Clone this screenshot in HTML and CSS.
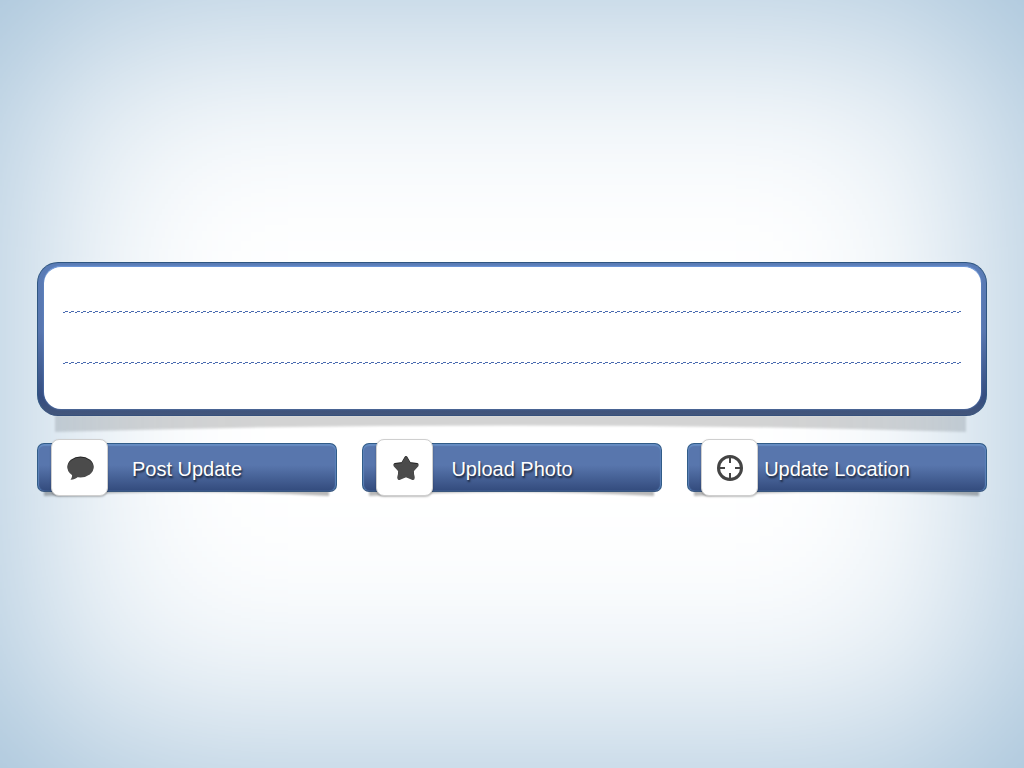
FILE: index.html
```html
<!DOCTYPE html>
<html lang="en">
<head>
<meta charset="utf-8">
<meta name="viewport" content="width=device-width, initial-scale=1">
<title>Post Update</title>
<link rel="stylesheet" href="styles.css">
</head>
<body class="page">
<form class="composer" onsubmit="return false">
  <div class="frame">
    <svg class="frame-shadow" viewBox="0 0 912 18" preserveAspectRatio="none" aria-hidden="true"><path d="M0 0H912V18Q456 4 0 18Z"/></svg>
    <div class="sheet">
      <textarea class="status" aria-label="Status update" rows="2"></textarea>
    </div>
  </div>
  <div class="actions">
    <button class="action" type="submit">
      <svg class="action-shadow" viewBox="0 0 286 8" preserveAspectRatio="none" aria-hidden="true"><path d="M0 0H286V8Q143 0 0 8Z"/></svg>
      <span class="face"><span class="label">Post Update</span></span>
      <span class="tile"><svg class="icon" viewBox="0 0 28 28" aria-hidden="true"><g class="edge"><ellipse cx="13.500" cy="11.500" rx="13" ry="10"/></g><g class="fill"><ellipse cx="13.500" cy="12.500" rx="13" ry="10"/><path d="M4.500 17C5.500 20.500 5.300 22.500 3.500 24.800C7 24.800 9.500 23.500 11.500 21Z"/></g></svg></span>
    </button>
    <button class="action" type="button">
      <svg class="action-shadow" viewBox="0 0 286 8" preserveAspectRatio="none" aria-hidden="true"><path d="M0 0H286V8Q143 0 0 8Z"/></svg>
      <span class="face"><span class="label">Upload Photo</span></span>
      <span class="tile"><svg class="icon" viewBox="0 0 28 28" aria-hidden="true"><path class="edge rounded" d="M14 2.500L17.500 8.500L25 9.500L20 15L21 22.500L14 20L7 22.500L8 15L3 9.500L10.500 8.500Z"/><path class="fill rounded" d="M14 3.500L17.500 9.500L25 10.500L20 16L21 23.500L14 20.500L7 23.500L8 16L3 10.500L10.500 9.500Z"/></svg></span>
    </button>
    <button class="action" type="button">
      <svg class="action-shadow" viewBox="0 0 286 8" preserveAspectRatio="none" aria-hidden="true"><path d="M0 0H286V8Q143 0 0 8Z"/></svg>
      <span class="face"><span class="label">Update Location</span></span>
      <span class="tile"><svg class="icon" viewBox="0 0 28 28" aria-hidden="true"><circle class="ring" cx="13" cy="13" r="11.500"/><path class="ticks" d="M13 3V8M13 18V23M3 13H8M18 13H23"/></svg></span>
    </button>
  </div>
</form>
</body>
</html>
```
FILE: styles.css
```css
* { box-sizing: border-box; }

.page {
  margin: 0;
  min-height: 100vh;
  display: flex;
  flex-direction: column;
  justify-content: center;
  padding: 0 37px;
  background: #fff;
  box-shadow: inset 0 0 240px #96b8d3;
  font-family: "Liberation Sans", Arial, sans-serif;
}

.composer {
  width: 100%;
  display: flex;
  flex-direction: column;
  gap: 27px;
  padding-bottom: 14px;
}

.frame {
  position: relative;
  padding: 3px 5px 6px 6px;
  border: 1px solid #2f5681;
  border-bottom-color: #36507b;
  border-radius: 21px;
  background: linear-gradient(#5a7cb6 0%, #5876af 45%, #344d80 88%, #43567b 100%);
}

.frame-shadow {
  position: absolute;
  z-index: -1;
  top: 100%;
  left: 17px;
  width: calc(100% - 37px);
  height: 17px;
  overflow: visible;
  fill: #000;
  opacity: 0.17;
  filter: blur(1px);
}

.sheet {
  height: 143px;
  padding: 0 20px 0 19px;
  border-top: 1px solid #6c95d6;
  border-radius: 17px;
  background: #fff;
  box-shadow: 0 0 2px #6c95d6;
}

.status {
  display: block;
  width: 100%;
  height: 100%;
  margin: 0;
  padding: 0;
  border: 0;
  outline: 0;
  resize: none;
  overflow: hidden;
  color: #33415f;
  font: 20px/51px "Liberation Sans", Arial, sans-serif;
  background-color: transparent;
  background-image:
    repeating-linear-gradient(90deg, transparent 0 2px, #4a6bb0 2px 5px, transparent 5px 6px),
    repeating-linear-gradient(90deg, #4a6bb0 0 2px, transparent 2px 6px),
    repeating-linear-gradient(90deg, transparent 0 2px, #4a6bb0 2px 5px, transparent 5px 6px),
    repeating-linear-gradient(90deg, #4a6bb0 0 2px, transparent 2px 6px);
  background-size: 100% 1px;
  background-position: 0 44px, 0 45px, 0 95px, 0 96px;
  background-repeat: no-repeat;
}

.actions {
  display: grid;
  grid-template-columns: repeat(3, 1fr);
  gap: 25px;
}

.action {
  position: relative;
  display: block;
  padding: 0;
  border: 0;
  background: none;
  color: #fff;
  font: 20px/24px "Liberation Sans", Arial, sans-serif;
  cursor: pointer;
}

.action-shadow {
  position: absolute;
  top: calc(100% - 4px);
  left: 7px;
  width: calc(100% - 15px);
  height: 8px;
  overflow: visible;
  fill: #000;
  opacity: 0.28;
  filter: blur(1px);
}

.face {
  position: relative;
  display: flex;
  align-items: center;
  justify-content: center;
  height: 49px;
  padding-top: 3px;
  border: 1px solid #315c88;
  border-bottom-color: #39577e;
  border-radius: 7px;
  background: linear-gradient(#5876ad 0%, #5876ad 45%, #334b7d 100%);
  box-shadow: inset 0 2px 1px #668cc2, inset 1px 0 1px #5c82ba, inset -1px 0 1px #5c82ba;
}

.label { text-shadow: 1px 2px 2px rgba(0, 0, 0, 0.65); }

.tile {
  position: absolute;
  top: -4px;
  left: 14px;
  display: grid;
  place-items: center;
  width: 57px;
  height: 57px;
  padding: 3px 0 0 3px;
  border: 1px solid #cfcfcf;
  border-radius: 8px;
  background: #fff;
  box-shadow: 0 1px 2px rgba(0, 0, 0, 0.25);
}

.icon {
  width: 28px;
  height: 28px;
  display: block;
}

.edge { fill: #222; }
.fill { fill: #4b4b4b; }
.rounded { stroke-width: 3; stroke-linejoin: round; }
.edge.rounded { stroke: #222; }
.fill.rounded { stroke: #4b4b4b; }
.ring { fill: none; stroke: #444; stroke-width: 3; }
.ticks { fill: none; stroke: #444; stroke-width: 2; }
```
